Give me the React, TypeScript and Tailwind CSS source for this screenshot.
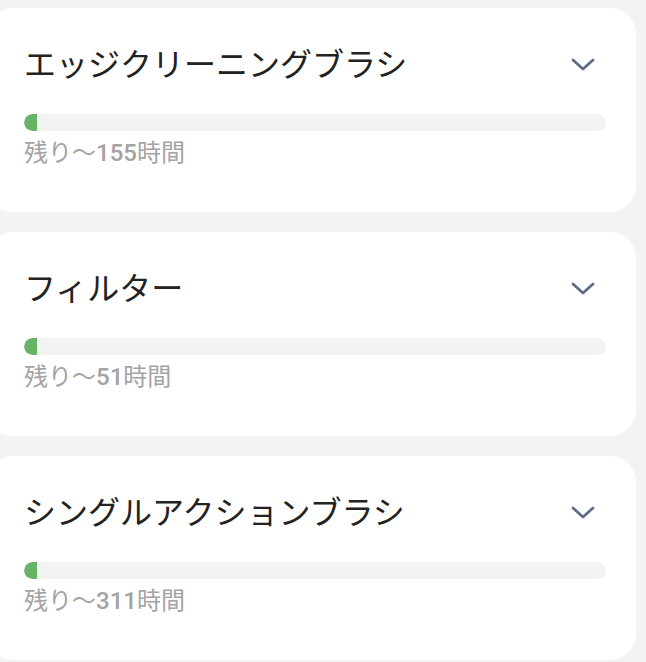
import React from "react";

interface Part {
  name: string;
  hours: number;
  percent: number;
}

const parts: Part[] = [
  { name: "エッジクリーニングブラシ", hours: 155, percent: 2.2 },
  { name: "フィルター", hours: 51, percent: 2.2 },
  { name: "シングルアクションブラシ", hours: 311, percent: 2.2 },
];

const Chevron = () => (
  <svg width="26" height="16" viewBox="0 0 26 16" fill="none">
    <path
      d="M3 3l10 9 10-9"
      stroke="#5f6d86"
      strokeWidth="2.8"
      strokeLinecap="round"
      strokeLinejoin="round"
    />
  </svg>
);

const PartCard = ({ part }: { part: Part }) => (
  <div className="-ml-[14px] h-[204px] shrink-0 rounded-[26px] bg-white pl-[38px] pr-[30px] pt-[34px]">
    {/* Title row */}
    <div className="flex h-[46px] items-center justify-between pr-[10px]">
      <span className="text-[32px] leading-[46px] text-[#222222]">{part.name}</span>
      <Chevron />
    </div>

    {/* Progress */}
    <div className="mt-[26px] h-[17px] w-full overflow-hidden rounded-full bg-[#f3f3f3]">
      <div
        className="h-full rounded-l-full bg-[#66b566]"
        style={{ width: `${part.percent}%` }}
      />
    </div>
    <div className="mt-[6px] text-[24px] leading-[32px] text-[#a3a3a3]">
      残り～<span className="font-medium">{part.hours}</span>時間
    </div>
  </div>
);

export default function App() {
  return (
    <div
      className="flex h-[662px] w-[646px] flex-col gap-5 overflow-hidden bg-[#f3f3f3] pr-[10px] pt-2"
      style={{ fontFamily: '"Roboto", "Noto Sans CJK JP", sans-serif' }}
    >
      {parts.map((p) => (
        <PartCard key={p.name} part={p} />
      ))}
    </div>
  );
}
